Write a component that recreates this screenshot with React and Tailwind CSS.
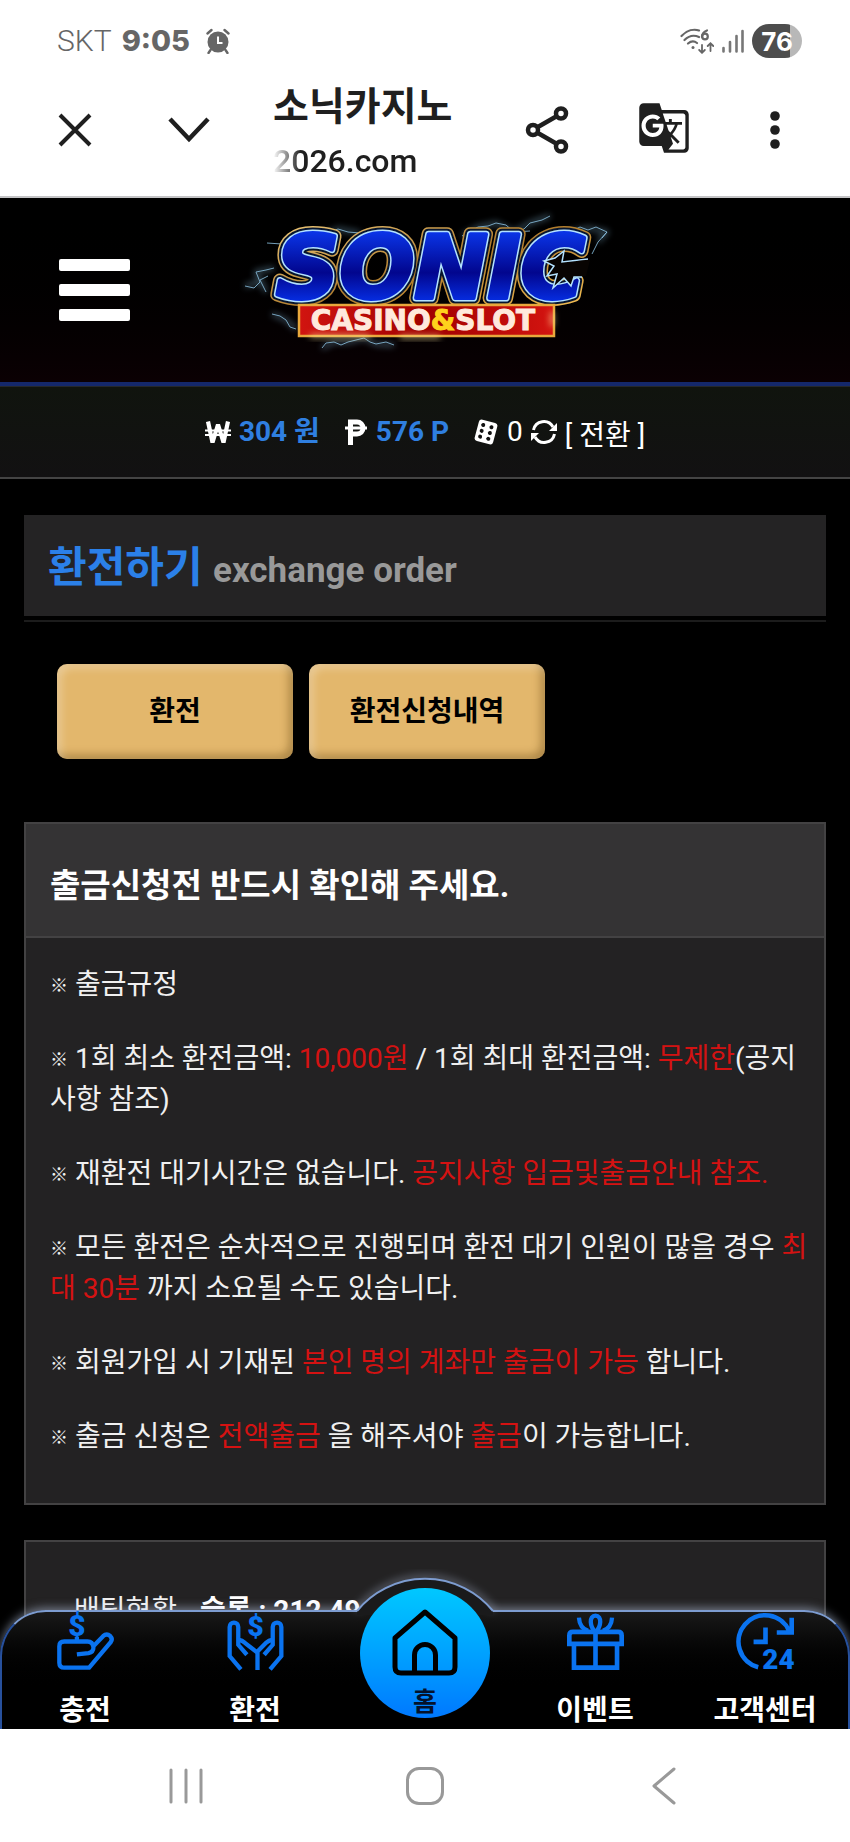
import React from 'react';
import { MdGTranslate } from 'react-icons/md';

const notices = [
    [{ text: '출금규정' }],
    [
        { text: '1회 최소 환전금액: ' },
        { text: '10,000원', red: true },
        { text: ' / 1회 최대 환전금액: ' },
        { text: '무제한', red: true },
        { text: '(공지사항 참조)' },
    ],
    [
        { text: '재환전 대기시간은 없습니다. ' },
        { text: '공지사항 입금및출금안내 참조.', red: true },
    ],
    [
        { text: '모든 환전은 순차적으로 진행되며 환전 대기 인원이 많을 경우 ' },
        { text: '최대 30분', red: true },
        { text: ' 까지 소요될 수도 있습니다.' },
    ],
    [
        { text: '회원가입 시 기재된 ' },
        { text: '본인 명의 계좌만 출금이 가능', red: true },
        { text: ' 합니다.' },
    ],
    [
        { text: '출금 신청은 ' },
        { text: '전액출금', red: true },
        { text: ' 을 해주셔야 ' },
        { text: '출금', red: true },
        { text: '이 가능합니다.' },
    ],
];

function AlarmIcon() {
    return (
        <svg viewBox="0 0 24 26" className="w-6 h-[26px]" fill="none" stroke="#666" aria-hidden="true">
            <circle cx="12" cy="14" r="10.5" fill="#666" stroke="none" />
            <path d="M1.5 5.5 5.5 2M22.5 5.5 18.5 2M4.5 22 2.5 25M19.5 22l2 3" strokeWidth="2.4" strokeLinecap="round" />
            <path d="M12 8.5V15h4.5" stroke="#fff" strokeWidth="2" />
        </svg>
    );
}

function WifiIcon() {
    return (
        <svg viewBox="0 0 34 26" className="w-[34px] h-[26px]" fill="none" stroke="#666" strokeWidth="2.2" strokeLinecap="round" aria-hidden="true">
            <path d="M1.5 8C7 2 14 1 19 2.5M4.5 12C9 7.5 14.5 7 19 9M8 15.5C11 13 14.5 13 17 15" />
            <circle cx="13" cy="19.5" r="1.5" fill="#666" stroke="none" />
            <path d="M27 2.5C23 4 22 7 22 9" />
            <circle cx="25" cy="8.5" r="2.8" />
            <path d="M22 17v7.5M19.2 22l2.8 2.8L24.8 22M30.5 23v-7.5M27.7 18l2.8-2.8L33.3 18" strokeWidth="1.8" />
        </svg>
    );
}

function StatusBar() {
    return (
        <div className="flex items-center justify-between h-20 shrink-0 pt-0.5 pl-[57px] pr-12 text-[#666]">
            <div className="flex items-center">
                <span className="text-[30px] font-light leading-10">SKT</span>
                <span className="ml-2.5 mr-4 font-['Inter',sans-serif] text-[29px] font-extrabold leading-10">9:05</span>
                <AlarmIcon />
            </div>
            <div className="flex items-center gap-2">
                <WifiIcon />
                <svg viewBox="0 0 22 24" className="w-[22px] h-6" stroke="#777" strokeWidth="2.6" strokeLinecap="round" aria-hidden="true">
                    <path d="M1.5 19v3.5M8 13v9.5M14.5 7v15.5M20.5 2v20.5" />
                </svg>
                <span className="flex items-center justify-center w-[50px] h-[34px] rounded-full bg-linear-to-r from-[#4d4d4d] from-76% to-[#b8b8b8] to-76% font-['Inter',sans-serif] text-[26px] font-bold text-white">
                    76
                </span>
            </div>
        </div>
    );
}

function BrowserBar() {
    return (
        <header className="flex items-center gap-[54px] h-[118px] shrink-0 px-[45px] pb-3 border-b-2 border-[#c4c4c6] text-[#1f1f1f]">
            <button aria-label="Close" className="flex items-center justify-center w-[60px] h-[60px] mb-1">
                <svg viewBox="0 0 34 34" className="w-[34px] h-[34px]" stroke="currentColor" strokeWidth="4"><path d="M2 2l30 30M32 2L2 32" /></svg>
            </button>
            <button aria-label="Minimize" className="flex items-center justify-center w-[60px] h-[60px] mb-1">
                <svg viewBox="0 0 42 26" className="w-[42px] h-[26px]" fill="none" stroke="currentColor" strokeWidth="4.5"><path d="M2 2l19 20L40 2" /></svg>
            </button>
            <div className="flex-1 min-w-0 whitespace-nowrap">
                <div className="text-[39px] font-bold leading-[58px]">소닉카지노</div>
                <div className="text-[32px] font-medium leading-[50px] [mask-image:linear-gradient(to_right,transparent,black_28px)]">2026.com</div>
            </div>
            <button aria-label="Share" className="flex items-center justify-center w-[60px] h-[60px] mb-1">
                <svg viewBox="0 0 44 48" className="w-11 h-12" fill="none" stroke="currentColor" strokeWidth="4.5">
                    <circle cx="8" cy="24" r="5" />
                    <circle cx="36" cy="7.5" r="5" />
                    <circle cx="36" cy="40.5" r="5" />
                    <path d="M12 21.5 32 10M12 26.5 32 38" />
                </svg>
            </button>
            <button aria-label="Translate" className="flex items-center justify-end w-[60px] h-[60px] mb-2">
                <MdGTranslate className="w-[54px] h-[54px] shrink-0" />
            </button>
            <button aria-label="More" className="flex items-center justify-center w-[60px] h-[60px] mb-1">
                <svg viewBox="0 0 10 38" className="w-[10px] h-[38px]" fill="currentColor"><circle cx="5" cy="5" r="4.8" /><circle cx="5" cy="19" r="4.8" /><circle cx="5" cy="33" r="4.8" /></svg>
            </button>
        </header>
    );
}

function Logo() {
    return (
        <svg viewBox="-5 0 400 180" className="w-[400px] h-[180px]" role="img" aria-label="Sonic Casino & Slot">
            <defs>
                <linearGradient id="letter" x1="0" y1="0" x2="0" y2="1">
                    <stop offset="0.15" stopColor="#0a35e8" />
                    <stop offset="0.55" stopColor="#02068e" />
                    <stop offset="0.85" stopColor="#0630e8" />
                </linearGradient>
                <linearGradient id="gold" x1="0" y1="0" x2="1" y2="1">
                    <stop offset="0" stopColor="#f3cf80" />
                    <stop offset="0.5" stopColor="#b07c2c" />
                    <stop offset="1" stopColor="#ffc95a" />
                </linearGradient>
                <linearGradient id="red" x1="0" y1="0" x2="1" y2="0">
                    <stop offset="0" stopColor="#d11410" />
                    <stop offset="0.5" stopColor="#a00000" />
                    <stop offset="1" stopColor="#d41410" />
                </linearGradient>
                <filter id="glow" x="-20%" y="-20%" width="140%" height="140%">
                    <feGaussianBlur stdDeviation="3" />
                </filter>
            </defs>
            {/* lightning */}
            <g fill="none" stroke="#8fc6e6" strokeLinejoin="round">
                <g strokeWidth="4" opacity="0.4" filter="url(#glow)">
                    <path d="M232 36 248 27 266 23 284 32 300 23 320 16M340 32 358 28 377 32 368 42M15 86 30 82 26 72 44 68M36 92 30 80M42 114 56 120 66 129M92 148 104 142 118 142 134 138 146 144 164 145M96 34 108 29 130 33" />
                </g>
                <g strokeWidth="1" opacity="0.8">
                    <path d="M232 36 248 27 258 26 266 23 276 25 284 32 294 29 300 23 312 20 320 16M284 32 300 31M340 32 350 27 358 30 366 27 377 32 368 42 362 54M377 32 372 38" />
                    <path d="M15 86 24 88 30 82 26 72 36 70 44 68M36 92 30 80 38 76M37 43 52 44M42 114 50 116 56 120 60 127 66 129M92 148 96 143 104 142 111 145 118 142 134 138 140 142 146 144 156 142 164 145M66 34 68 31M96 34 108 29 118 32 130 33" />
                </g>
            </g>
            <g fontFamily="'DejaVu Sans', sans-serif" fontWeight="700" fontStyle="italic" fontSize="88" strokeLinejoin="round">
                <text x="46" y="98" fill="none" stroke="url(#gold)" strokeWidth="14">SONIC</text>
                <text x="46" y="98" fill="none" stroke="#06152e" strokeWidth="11">SONIC</text>
                <text x="46" y="98" fill="none" stroke="#b4e2ff" strokeWidth="7">SONIC</text>
                <text x="46" y="98" fill="url(#letter)" stroke="url(#letter)" strokeWidth="4">SONIC</text>
            </g>
            {/* jagged bite of the last letter */}
            <path d="M358 59 332 62 334 51 325 58 314 61 324 66 317 76 327 74 323 88 334 78 341 86 344 77 352 77" fill="#080402" stroke="#b4e2ff" strokeWidth="1.5" />
            <path d="M360 60 347 61 347 76 356 76Z" fill="#080402" />
            <rect x="69" y="105" width="255" height="31" fill="url(#red)" stroke="#e8a83c" strokeWidth="2.5" />
            <path d="M80 136h60M170 137h40M322 112v14" stroke="#ffe9a0" strokeWidth="2.5" filter="url(#glow)" />
            <text x="193" y="130" textAnchor="middle" fontFamily="'DejaVu Sans', sans-serif" fontWeight="700" fontSize="28" fill="#ffe9dc" stroke="#ffe9dc">
                CASINO<tspan fill="#ffd21c" stroke="#ffd21c">&amp;</tspan>SLOT
            </text>
        </svg>
    );
}

function SiteHeader() {
    return (
        <header className="grid grid-cols-[1fr_auto_1fr] items-center h-[188px] overflow-hidden bg-linear-to-b from-black to-[#0b0003] border-b-4 border-[#14286b]">
            <button aria-label="Menu" className="flex flex-col gap-[13px] w-[71px] ml-[59px]">
                <span className="h-3 rounded-xs bg-white"></span>
                <span className="h-3 rounded-xs bg-white"></span>
                <span className="h-3 rounded-xs bg-white"></span>
            </button>
            <Logo />
        </header>
    );
}

function Balance() {
    return (
        <div className="flex items-center justify-center h-[93px] whitespace-nowrap bg-linear-to-b from-[#10140e] to-[#121112] border-t border-t-[#25282c] border-b-2 border-b-[#444] text-[28px] text-white">
            <svg viewBox="0 0 26 26" className="w-[26px] h-[26px] mr-2" fill="none" stroke="#fff" aria-hidden="true">
                <path d="M3 2.5 7.5 23.5 13 5.5 18.5 23.5 23 2.5" strokeWidth="4.2" strokeLinejoin="bevel" />
                <path d="M0 11.5h26M0 16h26" strokeWidth="1.8" />
            </svg>
            <strong className="mr-6 text-[#2f7fe0]">304 원</strong>
            <svg viewBox="0 0 24 26" className="w-6 h-[26px] mr-2" fill="none" stroke="#fff" aria-hidden="true">
                <path d="M6.5 26V3H13a5.5 5.5 0 0 1 0 12H7" strokeWidth="5" />
                <path d="M1 9h22" strokeWidth="3" />
            </svg>
            <strong className="mr-6 text-[#2f7fe0]">576 P</strong>
            <svg viewBox="0 0 26 26" className="w-[26px] h-[26px] mr-2" aria-hidden="true">
                <g transform="rotate(15 13 13)">
                    <rect x="3.5" y="2" width="19" height="22" rx="3" fill="#fff" />
                    <g fill="#111">
                        <circle cx="8.5" cy="7" r="2" /><circle cx="8.5" cy="13" r="2" /><circle cx="8.5" cy="19" r="2" />
                        <circle cx="17" cy="7" r="2" /><circle cx="17" cy="13" r="2" /><circle cx="17" cy="19" r="2" />
                    </g>
                </g>
            </svg>
            <span className="mr-2">0</span>
            <button className="flex items-center">
                <svg viewBox="0 0 26 26" className="w-[26px] h-[26px] mr-2" fill="none" stroke="#fff" strokeWidth="3" aria-hidden="true">
                    <path d="M2.5 11A10.5 10.5 0 0 1 22 8M23.5 15A10.5 10.5 0 0 1 4 18" />
                    <path d="M26 4v8h-8zM0 22v-8h8z" fill="#fff" stroke="none" />
                </svg>
                <span className="pt-2">[ 전환 ]</span>
            </button>
        </div>
    );
}

function NoticeCard() {
    return (
        <section className="mt-[63px] border-2 border-[#434243] bg-[#232223]">
            <h2 className="px-6 pt-[38px] pb-[26px] border-b-2 border-[#434243] bg-[#343334] text-[33px] font-bold leading-[48px] text-white">
                출금신청전 반드시 확인해 주세요.
            </h2>
            <div className="flex flex-col gap-[33px] pl-6 pr-3 pt-[26px] pb-[46px] text-[28px] leading-[41px] text-[#f0f0f0]">
                {notices.map((parts, i) => (
                    <p key={i}>
                        <span className="align-[2px] text-[18px] font-black leading-none">※</span>{' '}
                        {parts.map((part, j) => (
                            <span key={j} className={part.red ? 'text-[#d41212]' : ''}>{part.text}</span>
                        ))}
                    </p>
                ))}
            </div>
        </section>
    );
}

function ChargeIcon() {
    return (
        <svg viewBox="0 0 172 172" className="w-[57px] h-[57px] overflow-visible" fill="none" stroke="#0a73f0" strokeWidth="13" aria-hidden="true">
            <path d="M60 125 95 121Q110 118 110 103 108 86 92 86H22Q7 86 7 100V150Q7 165 22 165H97L162 88Q169 78 161 70 150 60 139 70L106 104M60 72v14" />
            <text x="60" y="70" textAnchor="middle" fontFamily="Roboto, sans-serif" fontWeight="900" fontSize="90" fill="#0a73f0" stroke="none">$</text>
        </svg>
    );
}

function WithdrawIcon() {
    return (
        <svg viewBox="0 0 172 172" className="w-[57px] h-[57px] overflow-visible" fill="none" stroke="#0a73f0" strokeWidth="13" aria-hidden="true">
            <path d="M42 170 8 130V42a12 12 0 0 1 26 0V96L60 126M130 170 164 130V42a12 12 0 0 0-26 0V96L112 126" />
            <path d="M34 80Q46 82 54 90L92 120V172M138 80Q126 82 118 90L92 116" />
            <text x="86" y="68" textAnchor="middle" fontFamily="Roboto, sans-serif" fontWeight="900" fontSize="86" fill="#0a73f0" stroke="none">$</text>
        </svg>
    );
}

function GiftIcon() {
    return (
        <svg viewBox="0 0 172 172" className="w-[57px] h-[57px]" fill="none" stroke="#0a73f0" strokeWidth="14" aria-hidden="true">
            <path d="M7 93V68Q7 57 18 57H154Q165 57 165 68V93ZM21 93V165H151V93M86 57V165" />
            <path d="M86 57C68 42 66 8 86 8S104 42 86 57M36 14Q38 46 64 54M136 14Q134 46 108 54" strokeWidth="13" />
        </svg>
    );
}

function SupportIcon() {
    return (
        <svg viewBox="0 0 172 172" className="w-[57px] h-[57px] overflow-visible" fill="none" stroke="#0a73f0" strokeWidth="14" aria-hidden="true">
            <path d="M64 164A80 80 0 1 1 158 55M165 14V59H120M86 44V87H50" />
            <text x="125" y="170" textAnchor="middle" fontFamily="Roboto, sans-serif" fontWeight="900" fontSize="84" fill="#0a73f0" stroke="none">24</text>
        </svg>
    );
}

function NavItem({ icon, label }) {
    return (
        <a href="#" className="flex flex-col items-center justify-between pt-[3px]">
            {icon}
            <span className="text-[28px] font-bold leading-9 text-white whitespace-nowrap">{label}</span>
        </a>
    );
}

function BottomNav() {
    return (
        <nav className="absolute inset-x-0 bottom-0 h-[119px]">
            <div className="absolute inset-0 rounded-t-[46px] border-2 border-b-0 border-t-[#7d9cd0] border-x-[#27509c] bg-linear-to-b from-[#191919] to-black to-70% shadow-[0_-2px_10px_rgba(200,215,245,0.5)]"></div>
            <svg viewBox="0 0 180 50" className="absolute left-1/2 -top-[41px] w-[180px] h-[50px] -translate-x-1/2" aria-hidden="true">
                <defs>
                    <filter id="halo" x="-20%" y="-50%" width="140%" height="200%"><feGaussianBlur stdDeviation="4" /></filter>
                </defs>
                <path d="M22 41A88 88 0 0 1 158 41" fill="none" stroke="#c8d7f5" strokeWidth="4" opacity="0.5" filter="url(#halo)" />
                <path d="M22 42A88 88 0 0 1 158 42V46H22Z" fill="#1a1a1b" />
                <path d="M22 42A88 88 0 0 1 158 42" fill="none" stroke="#7d9cd0" strokeWidth="2" />
            </svg>
            <div className="relative grid grid-cols-5 h-full">
                <NavItem icon={<ChargeIcon />} label="충전" />
                <NavItem icon={<WithdrawIcon />} label="환전" />
                <a href="#" className="flex flex-col items-center justify-self-center w-[130px] h-[130px] -mt-[22px] pt-[20px] rounded-full bg-linear-to-b from-[#00c8ff] to-[#0078ff]">
                    <svg viewBox="0 0 66 68" className="w-[66px] h-[68px] shrink-0" fill="none" stroke="#000" strokeWidth="5" strokeLinejoin="round" aria-hidden="true">
                        <path d="M33 4 3 30V59Q3 65 9 65H57Q63 65 63 59V30Z" />
                        <path d="M22.5 65V47a10.5 10.5 0 0 1 21 0V65" />
                    </svg>
                    <span className="mt-2 text-[26px] font-bold leading-9 text-[#04122c]">홈</span>
                </a>
                <NavItem icon={<GiftIcon />} label="이벤트" />
                <NavItem icon={<SupportIcon />} label="고객센터" />
            </div>
        </nav>
    );
}

function SystemNav() {
    return (
        <div className="grid grid-cols-3 items-center justify-items-center h-[113px] shrink-0 px-[67px] bg-white">
            <button aria-label="Recent apps">
                <svg viewBox="0 0 34 36" className="w-[34px] h-9" stroke="#999" strokeWidth="3" strokeLinecap="round"><path d="M2 2v32M17 2v32M32 2v32" /></svg>
            </button>
            <button aria-label="Home screen" className="w-[38px] h-[38px] rounded-[13px] border-[3px] border-[#999]"></button>
            <button aria-label="Back">
                <svg viewBox="0 0 24 38" className="w-6 h-[38px]" fill="none" stroke="#999" strokeWidth="3" strokeLinecap="round" strokeLinejoin="round"><path d="M22 2 2 19l20 17" /></svg>
            </button>
        </div>
    );
}

export default function App() {
    return (
        <div className="flex flex-col h-screen overflow-hidden bg-white font-['Roboto','Noto_Sans_CJK_KR',sans-serif]">
            <StatusBar />
            <BrowserBar />
            <div className="relative flex-1 min-h-0 overflow-hidden bg-black">
                <SiteHeader />
                <Balance />
                <main className="px-6 pt-9">
                    <div className="pb-1 border-b-2 border-[#1c1c1c]">
                        <h1 className="px-6 pt-[22px] pb-[14px] bg-[#242324] text-[42px] font-bold leading-[62px] text-[#2b80e8]">
                            환전하기 <small className="text-[35px] font-bold text-[#999]">exchange order</small>
                        </h1>
                    </div>
                    <div className="flex gap-4 mt-[42px] pl-[33px]">
                        {['환전', '환전신청내역'].map((label) => (
                            <button
                                key={label}
                                className="w-[236px] h-[95px] rounded-[10px] bg-[#e3b76c] text-[28px] font-semibold text-black shadow-[inset_4px_4px_8px_rgba(255,255,255,0.3),inset_-4px_-4px_8px_rgba(90,60,10,0.4)]"
                            >
                                {label}
                            </button>
                        ))}
                    </div>
                    <NoticeCard />
                    <section className="mt-[35px] px-12 pt-12 h-64 border-2 border-[#434243] bg-[#232223] text-[28px] leading-[41px] text-[#f0f0f0]">
                        배팅현황 <strong className="ml-4 text-white">슬롯 : 212,49</strong>
                    </section>
                </main>
                <BottomNav />
            </div>
            <SystemNav />
        </div>
    );
}
